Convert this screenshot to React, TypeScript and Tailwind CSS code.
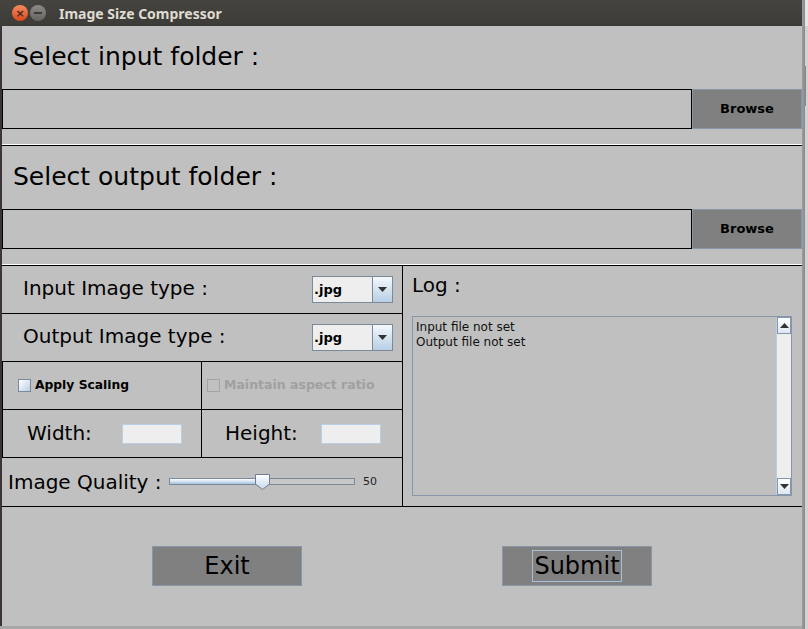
import React from "react"

const Combo = () => (
  <div className="flex h-[27px] w-[81px] border border-[#7a8a99]">
    <div className="flex-1 flex items-center pl-[1px] bg-[#eeeeee] border-r border-[#7a8a99] text-[13px] font-bold">
      .jpg
    </div>
    <div className="w-[19px] flex items-center justify-center bg-gradient-to-b from-[#f4f8fc] to-[#b8cfe5]">
      <svg width="9" height="5" viewBox="0 0 9 5">
        <path d="M0 0h9L4.5 5z" fill="#333" />
      </svg>
    </div>
  </div>
)

const CheckBox = ({ disabled }: { disabled?: boolean }) => (
  <div
    className={
      disabled
        ? "w-[13px] h-[13px] border border-[#a4a4a4]"
        : "w-[13px] h-[13px] border border-[#7a8a99] bg-gradient-to-br from-[#ffffff] to-[#b8cfe5]"
    }
  />
)

const Field = () => (
  <div className="flex h-[40px]">
    <div className="w-[690px] border border-black" />
    <button className="flex-1 bg-[#808080] border border-[#8796a8] text-[13px] font-bold text-black">
      Browse
    </button>
  </div>
)

const Separator = () => (
  <div className="flex flex-col">
    <div className="h-[15px]" />
    <div className="h-[1px] bg-white" />
    <div className="h-[1px] bg-black" />
  </div>
)

const Slider = () => (
  <div className="relative w-[186px] h-[16px]">
    <div className="absolute left-0 right-0 top-[4px] h-[7px] border border-[#7a8a99] bg-[#c8c8c8]" />
    <div className="absolute left-0 w-[90px] top-[4px] h-[7px] border border-[#7a8a99] bg-gradient-to-b from-[#ffffff] to-[#a9c3e0]" />
    <svg className="absolute left-[86px] top-0" width="15" height="16" viewBox="0 0 15 16">
      <defs>
        <linearGradient id="th" x1="0" y1="0" x2="0" y2="1">
          <stop offset="0" stopColor="#ffffff" />
          <stop offset="1" stopColor="#c6d8ec" />
        </linearGradient>
      </defs>
      <path d="M0.5 0.5h14v9.5l-7 5.5l-7-5.5z" fill="url(#th)" stroke="#6e7e90" />
    </svg>
  </div>
)

const TitleBar = () => (
  <div className="h-[26px] flex items-center bg-gradient-to-b from-[#45443f] to-[#3c3b37] pl-[12px]">
    <div className="w-[16px] h-[16px] rounded-full bg-gradient-to-b from-[#f58a5c] to-[#d9461a] flex items-center justify-center text-[#3c2a20] text-[11px] font-bold leading-none">
      ×
    </div>
    <div className="ml-[2px] w-[16px] h-[16px] rounded-full bg-gradient-to-b from-[#8c8a84] to-[#65645f] flex items-center justify-center">
      <div className="w-[8px] h-[2px] bg-[#3c3b37]" />
    </div>
    <span className="ml-[13px] text-[14px] font-bold text-[#dfdbd2] font-['Noto_Sans',sans-serif]">
      Image Size Compressor
    </span>
  </div>
)

export default function App() {
  return (
    <div className="w-[808px] h-[629px] flex bg-[#cfcfcf] overflow-hidden font-['DejaVu_Sans',sans-serif] text-black">
      <div className="w-[802px] flex flex-col">
        <TitleBar />
        <div className="flex-1 flex flex-col bg-[#c0c0c0] border-l-2 border-[#3c3437]">
          <div className="h-[63px] pt-[17px] pl-[11px] text-[25px] leading-[28px]">Select input folder :</div>
          <Field />
          <Separator />
          <div className="h-[63px] pt-[17px] pl-[11px] text-[25px] leading-[28px]">Select output folder :</div>
          <Field />
          <Separator />

          <div className="flex h-[241px] border-b border-black">
            <div className="w-[401px] flex flex-col border-r border-black">
              <div className="h-[48px] flex items-center justify-between pl-[21px] pr-[9px] border-b border-black">
                <span className="text-[20px] pb-[4px]">Input Image type :</span>
                <Combo />
              </div>
              <div className="h-[48px] flex items-center justify-between pl-[21px] pr-[9px] border-b border-black">
                <span className="text-[20px] pb-[4px]">Output Image type :</span>
                <Combo />
              </div>
              <div className="h-[48px] flex border-b border-black">
                <div className="w-[200px] flex items-center gap-[4px] pl-[15px] border-l border-r border-black">
                  <CheckBox />
                  <span className="text-[12.3px] font-bold">Apply Scaling</span>
                </div>
                <div className="flex-1 flex items-center gap-[4px] pl-[5px] text-[#a0a0a0]">
                  <CheckBox disabled />
                  <span className="text-[12.5px] font-bold">Maintain aspect ratio</span>
                </div>
              </div>
              <div className="h-[48px] flex border-b border-black">
                <div className="w-[200px] flex items-center pl-[24px] border-l border-r border-black">
                  <span className="w-[95px] text-[20px] pb-[2px]">Width:</span>
                  <div className="w-[60px] h-[20px] bg-[#eeeeee] border border-[#b8cfe5]" />
                </div>
                <div className="flex-1 flex items-center pl-[23px]">
                  <span className="w-[96px] text-[20px] pb-[2px]">Height:</span>
                  <div className="w-[60px] h-[20px] bg-[#eeeeee] border border-[#b8cfe5]" />
                </div>
              </div>
              <div className="flex-1 flex items-center pl-[6px]">
                <span className="w-[161px] text-[20px]">Image Quality :</span>
                <Slider />
                <span className="ml-[8px] text-[11px] text-[#222]">50</span>
              </div>
            </div>

            <div className="flex-1 flex flex-col pl-[9px] pr-[10px] pt-[7px]">
              <div className="text-[20px] leading-[24px]">Log :</div>
              <div className="mt-[19px] h-[180px] flex border border-[#8796a8]">
                <div className="flex-1 pl-[3px] pt-[3px] text-[12px] leading-[15px] text-[#111]">
                  <div>Input file not set</div>
                  <div>Output file not set</div>
                </div>
                <div className="w-[15px] flex flex-col bg-[#eeeeee] border-l border-[#b8cfe5]">
                  <div className="h-[17px] flex items-center justify-center border border-[#8796a8] bg-gradient-to-b from-[#ffffff] to-[#dde7f2]">
                    <svg width="9" height="5" viewBox="0 0 9 5">
                      <path d="M0 5h9L4.5 0z" fill="#333" />
                    </svg>
                  </div>
                  <div className="flex-1" />
                  <div className="h-[17px] flex items-center justify-center border border-[#8796a8] bg-gradient-to-b from-[#ffffff] to-[#dde7f2]">
                    <svg width="9" height="5" viewBox="0 0 9 5">
                      <path d="M0 0h9L4.5 5z" fill="#333" />
                    </svg>
                  </div>
                </div>
              </div>
            </div>
          </div>

          <div className="flex-1 flex items-start pt-[39px] pl-[150px] gap-[200px]">
            <button className="w-[150px] h-[40px] bg-[#808080] border border-[#8796a8] text-[24px] text-black">
              Exit
            </button>
            <button className="w-[150px] h-[40px] bg-[#808080] border border-[#8796a8] flex items-center justify-center">
              <span className="px-[1px] h-[32px] flex items-center border border-[#a9bfd6] text-[24px] text-black">
                Submit
              </span>
            </button>
          </div>
        </div>
        <div className="h-[3px] bg-[#a8a8a8]" />
      </div>
      <div className="w-[3px] bg-gradient-to-r from-[#9c9c9c] to-[#8a8a8a]" />
      <div className="flex-1 flex flex-col bg-[#d2d2d2]">
        <div className="h-[26px] bg-[#e6e6e6]" />
        <div className="h-[40px]" />
        <div className="h-[40px] border-l border-[#888]" />
      </div>
    </div>
  )
}
